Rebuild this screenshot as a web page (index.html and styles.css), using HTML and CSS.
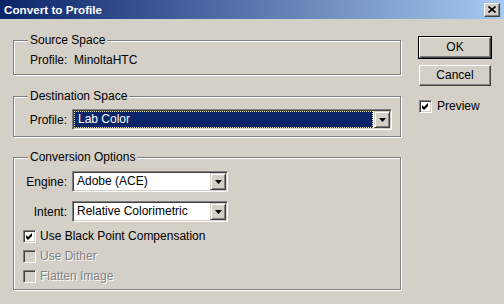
FILE: index.html
```html
<!DOCTYPE html>
<html lang="en">
<head>
    <meta charset="UTF-8">
    <meta name="viewport" content="width=device-width, initial-scale=1.0">
    <title>Convert to Profile</title>
    <link rel="stylesheet" href="styles.css">
</head>
<body>
    <div class="window">
        <div class="titlebar">
            <span class="title">Convert to Profile</span>
            <span class="close-btn">
                <svg width="8" height="7" viewBox="0 0 8 7">
                    <path d="M0.5 0.5 L7.5 6.5 M7.5 0.5 L0.5 6.5" stroke="#000" stroke-width="1.6" fill="none"/>
                </svg>
            </span>
        </div>

        <div class="content">
            <div class="groups">
                <fieldset class="group source">
                    <legend>Source Space</legend>
                    <div class="info">Profile:&nbsp; MinoltaHTC</div>
                </fieldset>

                <fieldset class="group destination">
                    <legend>Destination Space</legend>
                    <div class="field-row">
                        <span class="field-label">Profile:</span>
                        <div class="combo wide focused">
                            <span class="combo-value">Lab Color</span>
                            <span class="combo-arrow">
                                <svg width="7" height="4" viewBox="0 0 7 4"><polygon points="0,0 7,0 3.5,4" fill="#000"/></svg>
                            </span>
                        </div>
                    </div>
                </fieldset>

                <fieldset class="group conversion">
                    <legend>Conversion Options</legend>
                    <div class="field-row">
                        <span class="field-label">Engine:</span>
                        <div class="combo">
                            <span class="combo-value">Adobe (ACE)</span>
                            <span class="combo-arrow">
                                <svg width="7" height="4" viewBox="0 0 7 4"><polygon points="0,0 7,0 3.5,4" fill="#000"/></svg>
                            </span>
                        </div>
                    </div>
                    <div class="field-row intent">
                        <span class="field-label">Intent:</span>
                        <div class="combo">
                            <span class="combo-value">Relative Colorimetric</span>
                            <span class="combo-arrow">
                                <svg width="7" height="4" viewBox="0 0 7 4"><polygon points="0,0 7,0 3.5,4" fill="#000"/></svg>
                            </span>
                        </div>
                    </div>
                    <div class="checks">
                        <div class="check">
                            <span class="box">
                                <svg width="7" height="7" viewBox="0 0 7 7"><polygon points="0,2 2,4 6,0 6,3 2,7 0,5" fill="#000"/></svg>
                            </span>
                            <span>Use Black Point Compensation</span>
                        </div>
                        <div class="check disabled">
                            <span class="box"></span>
                            <span>Use Dither</span>
                        </div>
                        <div class="check disabled">
                            <span class="box"></span>
                            <span>Flatten Image</span>
                        </div>
                    </div>
                </fieldset>
            </div>

            <div class="actions">
                <div class="btn default">OK</div>
                <div class="btn">Cancel</div>
                <div class="check preview">
                    <span class="box">
                        <svg width="7" height="7" viewBox="0 0 7 7"><polygon points="0,2 2,4 6,0 6,3 2,7 0,5" fill="#000"/></svg>
                    </span>
                    <span>Preview</span>
                </div>
            </div>
        </div>
    </div>
</body>
</html>
```

FILE: styles.css
```css
body {
    margin: 0;
    background-color: #d4d0c8;
    font-family: 'Liberation Sans', Arial, sans-serif;
    font-size: 12px;
    color: #000;
}

.window {
    width: 504px;
    height: 304px;
    background: #d4d0c8;
    overflow: hidden;
}

.titlebar {
    height: 19px;
    padding: 0 4px;
    display: flex;
    align-items: center;
    justify-content: space-between;
    background: linear-gradient(to right, #0a246a, #a6caf0);
}

.title {
    color: white;
    font-weight: bold;
    font-size: 11.7px;
}

.close-btn {
    width: 14px;
    height: 12px;
    display: flex;
    align-items: center;
    justify-content: center;
    background: #d4d0c8;
    border: 1px solid;
    border-color: #fff #404040 #404040 #fff;
    box-shadow: inset -1px -1px 0 #808080;
}

.content {
    display: flex;
    padding-left: 13px;
}

.groups {
    width: 388px;
}

/* etched group boxes */
.group {
    margin: 14px 0 0;
    padding: 0;
    min-width: 0;
    border: 1px solid #808080;
    box-shadow: inset 1px 1px 0 #fff, 1px 1px 0 #fff;
}

.group legend {
    margin-left: 14px;
    padding: 0 2px;
    line-height: 14px;
    background: #d4d0c8;
}

.source {
    padding-bottom: 7px;
}

.source .info {
    margin: 6px 0 0 16px;
    line-height: 14px;
}

.destination {
    padding-bottom: 6px;
}

.conversion {
    margin-top: 13px;
    padding-bottom: 3px;
}

.field-row {
    display: flex;
    align-items: center;
    margin-top: 6px;
    padding-left: 10px;
}

.conversion .field-row {
    margin-top: 7px;
}

.conversion .field-row.intent {
    margin-top: 9px;
}

.field-label {
    width: 43px;
    padding-right: 5px;
    text-align: right;
}

/* sunken combo boxes */
.combo {
    width: 152px;
    height: 17px;
    display: flex;
    background: #fff;
    border: 1px solid;
    border-color: #808080 #fff #fff #808080;
    box-shadow: inset 1px 1px 0 #404040, inset -1px -1px 0 #d4d0c8;
    padding: 1px;
}

.combo.wide {
    width: 316px;
}

.combo-value {
    flex: 1;
    padding-left: 3px;
    line-height: 17px;
    white-space: nowrap;
}

.combo.focused .combo-value {
    margin-right: 1px;
    padding-left: 3px;
    line-height: 15px;
    color: white;
    background: #0a246a;
    border: 1px dotted #e6e0b0;
}

.combo-arrow {
    width: 14px;
    height: 15px;
    display: flex;
    align-items: center;
    justify-content: center;
    background: #d4d0c8;
    border: 1px solid;
    border-color: #d4d0c8 #404040 #404040 #d4d0c8;
    box-shadow: inset 1px 1px 0 #fff, inset -1px -1px 0 #808080;
}

.checks {
    margin-top: 4px;
    padding-left: 9px;
}

.check {
    height: 20px;
    display: flex;
    align-items: center;
    gap: 4px;
}

.box {
    width: 9px;
    height: 9px;
    display: flex;
    align-items: center;
    justify-content: center;
    background: #fff;
    border: 1px solid;
    border-color: #808080 #fff #fff #808080;
    box-shadow: inset 1px 1px 0 #404040, inset -1px -1px 0 #d4d0c8;
    padding: 1px;
}

.check.disabled {
    color: #808080;
    text-shadow: 1px 1px 0 #fff;
}

.check.disabled .box {
    background: #d4d0c8;
}

.actions {
    margin-left: 18px;
    padding-top: 18px;
}

.btn {
    width: 68px;
    height: 17px;
    line-height: 17px;
    text-align: center;
    background: #d4d0c8;
    border: 1px solid;
    border-color: #fff #404040 #404040 #fff;
    box-shadow: inset -1px -1px 0 #808080;
    padding: 1px;
    margin-bottom: 7px;
}

.btn.default {
    outline: 1px solid #000;
    outline-offset: 0;
}

.check.preview {
    margin-top: 10px;
    gap: 5px;
}
```
